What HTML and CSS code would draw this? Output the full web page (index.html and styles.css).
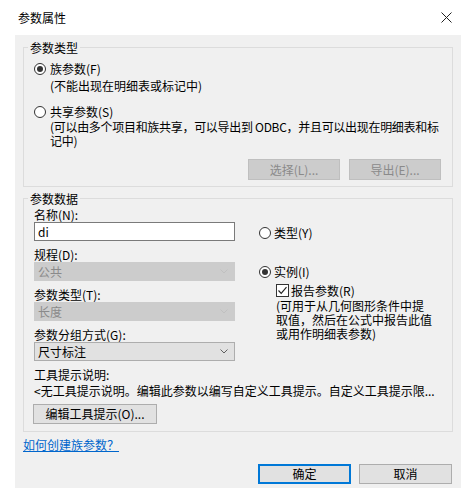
FILE: index.html
```html
<!DOCTYPE html>
<html lang="zh-CN">
<head>
  <meta charset="UTF-8">
  <meta name="viewport" content="width=device-width, initial-scale=1.0">
  <link rel="stylesheet" href="styles.css">
</head>
<body>

<div class="dialog">
  <div class="titlebar">
    <span class="title">参数属性</span>
    <svg class="close" width="11" height="11" viewBox="0 0 11 11">
      <path d="M0.5 0.5 L10.5 10.5 M10.5 0.5 L0.5 10.5" stroke="#222" stroke-width="1" fill="none"/>
    </svg>
  </div>

  <div class="client">
    <fieldset class="group group-type">
      <legend>参数类型</legend>
      <div class="radio-row first"><span class="radio checked"></span>族参数(F)</div>
      <div class="note note-family">(不能出现在明细表或标记中)</div>
      <div class="radio-row shared"><span class="radio"></span>共享参数(S)</div>
      <div class="note note-shared">(可以由多个项目和族共享，可以导出到 ODBC，并且可以出现在明细表和标<br>记中)</div>
      <div class="btn-row">
        <button class="btn" disabled>选择(L)...</button>
        <button class="btn" disabled>导出(E)...</button>
      </div>
    </fieldset>

    <fieldset class="group group-data">
      <legend>参数数据</legend>
      <div class="data-cols">
        <div class="col-left">
          <div class="field-label first">名称(N):</div>
          <div class="textbox">di</div>
          <div class="field-label">规程(D):</div>
          <div class="combo disabled">
            <span>公共</span>
            <svg class="chevron" width="8" height="5" viewBox="0 0 8 5"><polyline points="0.5,0.5 4,4 7.5,0.5" fill="none" stroke="#c0c0c0"/></svg>
          </div>
          <div class="field-label">参数类型(T):</div>
          <div class="combo disabled">
            <span>长度</span>
            <svg class="chevron" width="8" height="5" viewBox="0 0 8 5"><polyline points="0.5,0.5 4,4 7.5,0.5" fill="none" stroke="#c0c0c0"/></svg>
          </div>
          <div class="field-label">参数分组方式(G):</div>
          <div class="combo">
            <span>尺寸标注</span>
            <svg class="chevron" width="8" height="5" viewBox="0 0 8 5"><polyline points="0.5,0.5 4,4 7.5,0.5" fill="none" stroke="#606060"/></svg>
          </div>
        </div>

        <div class="col-right">
          <div class="radio-row kind-type"><span class="radio"></span>类型(Y)</div>
          <div class="radio-row kind-instance"><span class="radio checked"></span>实例(I)</div>
          <div class="check-row">
            <span class="checkbox">
              <svg width="11" height="11" viewBox="0 0 11 11"><polyline points="1.5,5.5 4.2,8.3 9.5,2.2" fill="none" stroke="#222" stroke-width="1.2"/></svg>
            </span>报告参数(R)
          </div>
          <div class="note note-report">(可用于从几何图形条件中提<br>取值，然后在公式中报告此值<br>或用作明细表参数)</div>
        </div>
      </div>

      <div class="tip-label">工具提示说明:</div>
      <div class="tip-text">&lt;无工具提示说明。编辑此参数以编写自定义工具提示。自定义工具提示限...</div>
      <button class="btn edit-tip">编辑工具提示(O)...</button>
    </fieldset>

    <a class="help-link" href="#">如何创建族参数？</a>

    <div class="footer">
      <button class="btn default">确定</button>
      <button class="btn">取消</button>
    </div>
  </div>
</div>

</body>
</html>
```

FILE: styles.css
```css
body {
  margin: 0;
  background-color: #fff;
  font-family: "Noto Sans CJK SC", "Liberation Sans", sans-serif;
  font-size: 12px;
  color: #000;
}

.dialog {
  width: 468px;
  height: 496px;
}

.titlebar {
  height: 35px;
  display: flex;
  align-items: center;
  justify-content: space-between;
  padding: 0 16px 0 18px;
  box-sizing: border-box;
}

.title {
  line-height: 15px;
}

.client {
  margin-left: 15px;
  width: 446px;
  height: 453px;
  background-color: #f0f0f0;
  box-sizing: border-box;
  padding: 5px 8px 0 8px;
  display: flex;
  flex-direction: column;
}

.group {
  margin: 0;
  border: 1px solid #dcdcdc;
  min-width: 0;
}

.group legend {
  padding: 0 2px;
  margin-left: -6px;
  line-height: 15px;
}

.group-type {
  padding: 0 11px 6px 10px;
}

.group-data {
  margin-top: 4px;
  padding: 0 10px 7px 10px;
}

/* radio + checkbox */
.radio-row,
.check-row {
  display: flex;
  align-items: center;
  height: 15px;
  line-height: 15px;
  gap: 4px;
}

.radio {
  width: 12px;
  height: 12px;
  border: 1px solid #333;
  border-radius: 50%;
  background-color: #fff;
  box-sizing: border-box;
  display: flex;
  align-items: center;
  justify-content: center;
}

.radio.checked::after {
  content: "";
  width: 6px;
  height: 6px;
  border-radius: 50%;
  background-color: #333;
}

.checkbox {
  width: 13px;
  height: 13px;
  border: 1px solid #333;
  background-color: #fff;
  box-sizing: border-box;
  display: flex;
  align-items: center;
  justify-content: center;
}

.note {
  line-height: 14px;
}

.radio-row.first {
  margin-top: 6px;
}

.note-family {
  margin: 2px 0 0 16px;
  line-height: 15px;
}

.radio-row.shared {
  margin-top: 11px;
}

.note-shared {
  margin: 1px 0 0 16px;
  letter-spacing: -0.3px;
  white-space: nowrap;
}

.btn-row {
  display: flex;
  justify-content: flex-end;
  gap: 9px;
  margin-top: 11px;
}

.btn {
  font: inherit;
  height: 20px;
  padding: 0;
  border: 1px solid #adadad;
  background-color: #e1e1e1;
  color: #000;
  line-height: 18px;
}

.btn:disabled {
  background-color: #ccc;
  border-color: #bfbfbf;
  color: #8a8a8a;
}

.btn-row .btn {
  width: 92px;
  height: 21px;
}

/* parameter data */
.data-cols {
  display: flex;
}

.col-left {
  width: 201px;
  display: flex;
  flex-direction: column;
}

.col-right {
  margin-left: 24px;
  display: flex;
  flex-direction: column;
}

.field-label {
  line-height: 15px;
  margin-top: 6px;
}

.field-label.first {
  margin-top: 1px;
}

.textbox {
  height: 19px;
  border: 1px solid #7a7a7a;
  background-color: #fff;
  box-sizing: border-box;
  padding: 0 3px;
  line-height: 17px;
}

.combo {
  height: 19px;
  border: 1px solid #adadad;
  background-color: #e1e1e1;
  box-sizing: border-box;
  padding: 0 6px 0 3px;
  display: flex;
  align-items: center;
  justify-content: space-between;
  line-height: 17px;
}

.combo.disabled {
  background-color: #ccc;
  border-color: #cccccc;
  color: #8a8a8a;
}

.kind-type {
  margin-top: 19px;
  gap: 3px;
}

.kind-instance {
  margin-top: 24px;
  gap: 3px;
}

.check-row {
  margin: 4px 0 0 17px;
  gap: 2px;
}

.note-report {
  margin: 1px 0 0 17px;
}

.tip-label {
  margin-top: 6px;
  line-height: 15px;
}

.tip-text {
  margin-top: 1px;
  line-height: 15px;
  white-space: nowrap;
}

.edit-tip {
  align-self: flex-start;
  width: 124px;
  margin: 6px 0 0 -1px;
  display: block;
}

.help-link {
  align-self: flex-start;
  margin-top: 5px;
  line-height: 15px;
  color: #0066cc;
}

.footer {
  display: flex;
  justify-content: flex-end;
  gap: 8px;
  margin-top: 12px;
  padding-right: 1px;
}

.footer .btn {
  width: 93px;
}

.btn.default {
  border-color: #0078d7;
  box-shadow: inset 0 0 0 1px #0078d7;
}
```
